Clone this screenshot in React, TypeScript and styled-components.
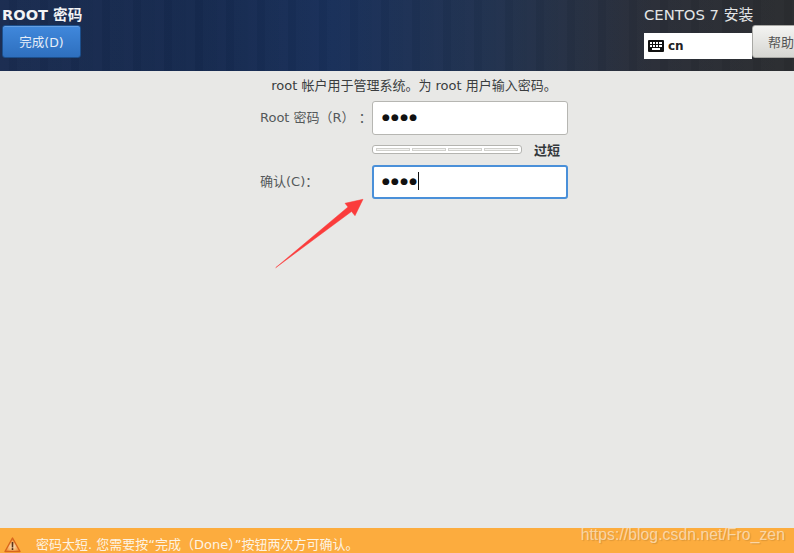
import styled, { createGlobalStyle } from 'styled-components';

const GlobalStyle = createGlobalStyle`
  html, body {
    margin: 0;
    height: 100%;
    overflow: hidden;
    background: #e8e8e6;
  }
  #root {
    height: 100%;
  }
`;

const FONT = `"DejaVu Sans", "Noto Sans CJK SC", sans-serif`;

const Screen = styled.div`
  position: relative;
  display: flex;
  flex-direction: column;
  width: 794px;
  height: 553px;
  overflow: hidden;
  font-family: ${FONT};
  color: #2e3436;
`;

const Header = styled.header`
  display: flex;
  justify-content: space-between;
  height: 71px;
  flex: none;
  background:
    repeating-linear-gradient(90deg, rgba(255, 255, 255, 0.012) 0 9px, rgba(0, 0, 0, 0.025) 9px 17px, rgba(255, 255, 255, 0.006) 17px 31px),
    linear-gradient(90deg, #1a2c50 0%, #162a4f 25%, #19305a 42%, #21324f 62%, #2a2e38 82%, #2b2d30 100%);
`;

const HeaderLeft = styled.div`
  display: flex;
  flex-direction: column;
  align-items: flex-start;
  padding: 5px 0 0 2px;
`;

const SpokeTitle = styled.h1`
  margin: 0;
  font-size: 14.6px;
  line-height: 20px;
  font-weight: 700;
  color: #f2f3f5;
`;

const DoneButton = styled.button`
  width: 79px;
  height: 33px;
  padding: 0;
  font: 12.5px ${FONT};
  color: #e6eef8;
  background: linear-gradient(180deg, #4088dc 0%, #2e6fbe 100%);
  border: 1px solid #1c4f8c;
  border-radius: 3px;
  box-shadow: inset 0 1px 0 rgba(255, 255, 255, 0.2);
`;

const HeaderRight = styled.div`
  display: flex;
  flex-direction: column;
  width: 150px;
  padding-top: 5px;
`;

const ProductName = styled.div`
  font-size: 14.8px;
  line-height: 20px;
  color: #e4e5e6;
`;

const HeaderControls = styled.div`
  display: flex;
  align-items: flex-start;
  margin-top: 8px;
`;

const KeyboardBox = styled.div`
  display: flex;
  align-items: center;
  gap: 4px;
  flex: none;
  width: 108px;
  height: 26px;
  padding-left: 4px;
  box-sizing: border-box;
  background: #fff;
  font-size: 12px;
  font-weight: 700;
  color: #222;
`;

const HelpButton = styled.button`
  flex: none;
  width: 60px;
  height: 33px;
  margin-top: -8px;
  padding: 0 0 0 15px;
  text-align: left;
  font: 13px ${FONT};
  color: #555;
  background: linear-gradient(180deg, #f4f4f2 0%, #d6d6d2 100%);
  border: 1px solid #a8a8a4;
  border-radius: 3px;
`;

const Main = styled.main`
  flex: 1;
  display: flex;
  flex-direction: column;
  align-items: center;
  padding: 6px 0 0 34px;
`;

const Intro = styled.p`
  margin: 0 0 6px;
  font-size: 13px;
  line-height: 18px;
  color: #3a3d3f;
`;

const Form = styled.div`
  display: grid;
  grid-template-columns: 112px 196px;
  width: 308px;
`;

const FieldLabel = styled.label`
  align-self: center;
  padding-bottom: 3px;
  font-size: 13px;
  color: #54585a;
  white-space: pre;
`;

const Input = styled.div<{ $focused?: boolean }>`
  display: flex;
  align-items: center;
  box-sizing: border-box;
  height: 34px;
  padding: 0 0 2px ${({ $focused }) => ($focused ? '8px' : '9px')};
  background: #fff;
  border-radius: 3px;
  border: ${({ $focused }) => ($focused ? '2px solid #4a90d9' : '1px solid #b6b6b2')};
`;

const Dots = styled.span`
  font-family: "DejaVu Sans", sans-serif;
  font-size: 9px;
  letter-spacing: 1.25px;
  color: #111;
`;

const Caret = styled.span`
  width: 1px;
  height: 18px;
  background: #111;
`;

const StrengthRow = styled.div`
  grid-column: 2;
  display: flex;
  align-items: center;
  gap: 12px;
  height: 30px;
  padding-bottom: 1px;
  box-sizing: border-box;
`;

const StrengthBar = styled.div`
  display: flex;
  gap: 2px;
  box-sizing: border-box;
  width: 150px;
  height: 9px;
  padding: 2px 3px;
  background: #fff;
  border: 1px solid #b4b4b0;
  border-radius: 3px;
`;

const StrengthCell = styled.span`
  flex: 1;
  border: 1px solid #d0d0cc;
  background: #f4f4f2;
`;

const StrengthText = styled.span`
  font-size: 13px;
  font-weight: 700;
  color: #33373a;
`;

const Arrow = styled.svg`
  position: absolute;
  left: 270px;
  top: 192px;
`;

const WarningBar = styled.footer`
  display: flex;
  align-items: center;
  gap: 15px;
  flex: none;
  height: 25px;
  padding: 5px 0 0 4px;
  box-sizing: border-box;
  background: #fcac3e;
  font-size: 13px;
  color: #fdf3e2;
`;

const WarningGlyph = styled.svg`
  flex: none;
  margin-top: 3px;
`;

const Watermark = styled.span`
  position: absolute;
  right: 9px;
  bottom: 9px;
  font-family: "Liberation Sans", Arial, sans-serif;
  font-size: 15.85px;
  color: rgba(255, 255, 255, 0.55);
  text-shadow: 1px 1px 1px rgba(0, 0, 0, 0.12);
`;

const KeyboardIcon = () => (
  <svg width="16" height="12" viewBox="0 0 16 12">
    <rect width="16" height="12" rx="1" fill="#111" />
    <g fill="#fff">
      <rect x="2" y="2" width="2" height="2" />
      <rect x="5" y="2" width="2" height="2" />
      <rect x="8" y="2" width="2" height="2" />
      <rect x="11" y="2" width="3" height="2" />
      <rect x="2" y="5" width="2" height="2" />
      <rect x="5" y="5" width="2" height="2" />
      <rect x="8" y="5" width="2" height="2" />
      <rect x="11" y="5" width="3" height="2" />
      <rect x="4" y="8" width="8" height="2" />
    </g>
  </svg>
);

const WarningIcon = () => (
  <WarningGlyph width="17" height="16" viewBox="0 0 17 16">
    <defs>
      <radialGradient id="warnGlow" cx="50%" cy="62%" r="45%">
        <stop offset="0%" stopColor="#fde2bc" />
        <stop offset="100%" stopColor="#f49a3c" />
      </radialGradient>
    </defs>
    <path d="M8.5 1 L16 14.5 H1 Z" fill="url(#warnGlow)" stroke="#d8661c" strokeWidth="1.4" strokeLinejoin="round" />
    <rect x="7.7" y="5" width="1.6" height="5.5" fill="#5a3218" />
    <rect x="7.7" y="11.2" width="1.6" height="1.7" fill="#3a2010" />
  </WarningGlyph>
);

export default function App() {
  return (
    <>
      <GlobalStyle />
      <Screen>
        <Header>
          <HeaderLeft>
            <SpokeTitle>ROOT 密码</SpokeTitle>
            <DoneButton>完成(D)</DoneButton>
          </HeaderLeft>
          <HeaderRight>
            <ProductName>CENTOS 7 安装</ProductName>
            <HeaderControls>
              <KeyboardBox>
                <KeyboardIcon />
                cn
              </KeyboardBox>
              <HelpButton>帮助</HelpButton>
            </HeaderControls>
          </HeaderRight>
        </Header>
        <Main>
          <Intro>root 帐户用于管理系统。为 root 用户输入密码。</Intro>
          <Form>
            <FieldLabel>Root 密码（R） ：</FieldLabel>
            <Input>
              <Dots>●●●●</Dots>
            </Input>
            <StrengthRow>
              <StrengthBar>
                <StrengthCell />
                <StrengthCell />
                <StrengthCell />
                <StrengthCell />
              </StrengthBar>
              <StrengthText>过短</StrengthText>
            </StrengthRow>
            <FieldLabel>确认(C)：</FieldLabel>
            <Input $focused>
              <Dots>●●●●</Dots>
              <Caret />
            </Input>
          </Form>
        </Main>
        <WarningBar>
          <WarningIcon />
          密码太短. 您需要按“完成（Done）”按钮两次方可确认。
        </WarningBar>
        <Arrow width="100" height="84" viewBox="0 0 100 84">
          <path d="M5.7 75.7 L78 15 L75 11.3 L93 7.3 L85 23.7 L81.5 19.5 Z" fill="#fb3c3c" stroke="#fb3c3c" strokeWidth="0.5" strokeLinejoin="round" />
        </Arrow>
        <Watermark>https://blog.csdn.net/Fro_zen</Watermark>
      </Screen>
    </>
  );
}
